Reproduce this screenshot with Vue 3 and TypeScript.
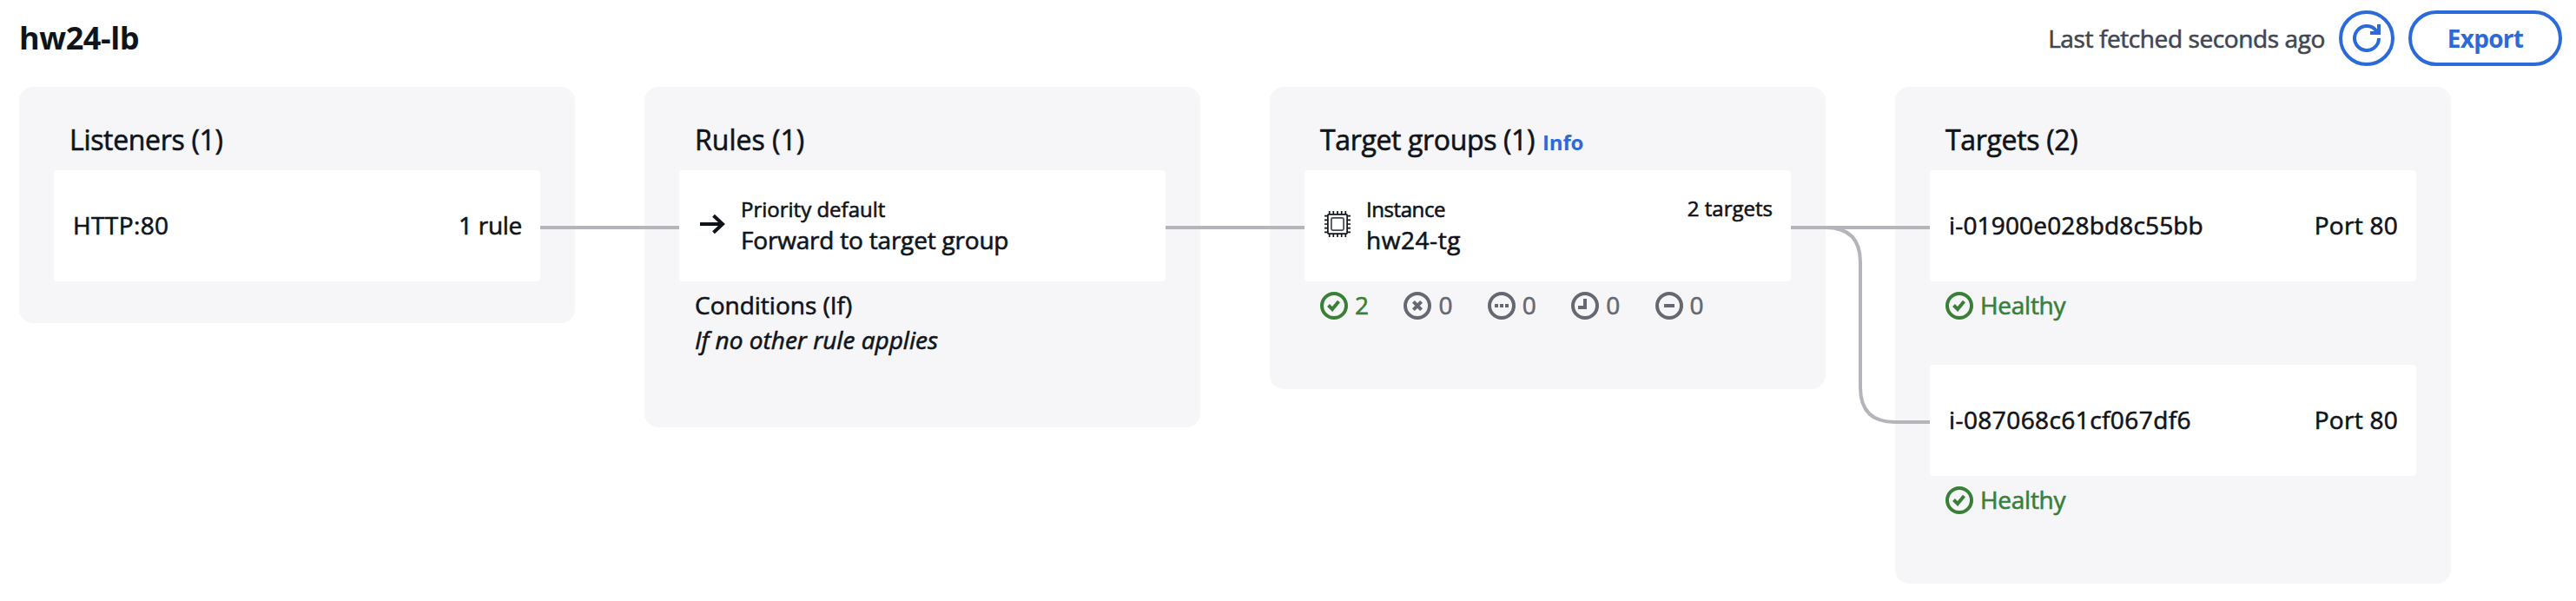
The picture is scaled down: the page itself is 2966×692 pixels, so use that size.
<script setup lang="ts">
type StatusKind = 'healthy' | 'unhealthy' | 'unused' | 'initial' | 'draining'

interface HealthCount {
  kind: StatusKind
  count: number
}

interface Target {
  id: string
  port: number
  fit: string
}

const glyphs: Record<StatusKind, string> = {
  healthy: 'M9.5 15.5l4.5 4.5 7.5-9',
  unhealthy: 'M11.4 11.4l9.2 9.2M20.6 11.4l-9.2 9.2',
  unused: 'M8 16h4M14 16h4M20 16h4',
  initial: 'M16 8v10H8',
  draining: 'M10 16h12',
}

const healthCounts: HealthCount[] = [
  { kind: 'healthy', count: 2 },
  { kind: 'unhealthy', count: 0 },
  { kind: 'unused', count: 0 },
  { kind: 'initial', count: 0 },
  { kind: 'draining', count: 0 },
]

const targets: Target[] = [
  { id: 'i-01900e028bd8c55bb', port: 80, fit: 'fit-a' },
  { id: 'i-087068c61cf067df6', port: 80, fit: 'fit-b' },
]
</script>

<template>
  <main class="map">
    <header class="header">
      <h1 class="title">hw24-lb</h1>
      <div class="actions">
        <span class="fetched">Last fetched seconds ago</span>
        <button class="btn btn-icon" type="button" aria-label="Refresh">
          <svg class="icon" viewBox="0 0 32 32">
            <path d="M30 16A14 14 0 1 1 27.5 8L30 11" />
            <path d="M30 0v10H20" />
          </svg>
        </button>
        <button class="btn btn-export" type="button"><span>Export</span></button>
      </div>
    </header>

    <div class="diagram">
      <section class="panel listeners">
        <h2 class="heading fit-listeners">Listeners (1)</h2>
        <div class="card">
          <span class="name fit-http">HTTP:80</span>
          <span class="end fit-rule">1 rule</span>
        </div>
      </section>

      <section class="panel rules">
        <h2 class="heading">Rules (1)</h2>
        <div class="card">
          <svg class="icon dark" viewBox="0 0 32 32">
            <path d="M2 16h26M17.5 6.2L28 16 17.5 25.8" />
          </svg>
          <div class="lines">
            <span class="small">Priority default</span>
            <span class="fit-forward">Forward to target group</span>
          </div>
        </div>
        <div class="conditions">
          <span>Conditions (If)</span>
          <em>If no other rule applies</em>
        </div>
      </section>

      <section class="panel groups">
        <h2 class="heading fit-groups">Target groups (1) <a class="info">Info</a></h2>
        <div class="card">
          <svg class="icon chip" viewBox="0 0 32 32">
            <rect x="4.9" y="4.9" width="22.2" height="22.2" rx="1" />
            <rect class="core" x="8.9" y="8.9" width="14.2" height="14.2" rx="1.6" />
            <path
              d="M6.7 1v4M11.3 1v4M16 1v4M20.7 1v4M25.3 1v4M6.7 27v4M11.3 27v4M16 27v4M20.7 27v4M25.3 27v4M1 6.7h4M1 11.3h4M1 16h4M1 20.7h4M1 25.3h4M27 6.7h4M27 11.3h4M27 16h4M27 20.7h4M27 25.3h4"
            />
          </svg>
          <div class="lines">
            <span class="small fit-instance">Instance</span>
            <span class="fit-tg">hw24-tg</span>
          </div>
          <span class="end small top">2 targets</span>
        </div>
        <ul class="counts">
          <li v-for="item in healthCounts" :key="item.kind" class="status" :class="{ ok: item.kind === 'healthy' }">
            <svg class="icon" viewBox="0 0 32 32">
              <circle cx="16" cy="16" r="14" />
              <path :d="glyphs[item.kind]" />
            </svg>
            <span>{{ item.count }}</span>
          </li>
        </ul>
      </section>

      <section class="panel targets">
        <h2 class="heading fit-targets">Targets (2)</h2>
        <div v-for="target in targets" :key="target.id" class="target">
          <div class="card">
            <span class="name" :class="target.fit">{{ target.id }}</span>
            <span class="end fit-port">Port {{ target.port }}</span>
          </div>
          <div class="status ok">
            <svg class="icon" viewBox="0 0 32 32">
              <circle cx="16" cy="16" r="14" />
              <path :d="glyphs.healthy" />
            </svg>
            <span class="fit-healthy">Healthy</span>
          </div>
        </div>
      </section>

      <svg class="connectors" viewBox="0 0 2800 572">
        <path d="M600 162H760M1320 162H1480M2040 162H2200" />
        <path d="M2040 162H2080Q2120 162 2120 202V346Q2120 386 2160 386H2200" />
      </svg>
    </div>
  </main>
</template>

<style>
body {
  background: #fff;
}
</style>

<style scoped>
.map {
  box-sizing: border-box;
  width: 2966px;
  height: 692px;
  padding: 12px 16px 0 22px;
  overflow: hidden;
  color: #0f141a;
  font: 400 28px/40px 'Open Sans', 'Noto Sans', sans-serif;
  -webkit-text-stroke: 0.6px currentColor;
}

.header {
  display: flex;
  align-items: center;
  justify-content: space-between;
  height: 64px;
  margin-bottom: 24px;
}

.title {
  margin: 0;
  font-size: 36px;
  font-weight: 700;
  letter-spacing: -0.4px;
  -webkit-text-stroke: 0;
}

.actions {
  display: flex;
  align-items: center;
}

.fetched {
  margin: 0 16px 1px 0;
  color: #424650;
  letter-spacing: -0.4px;
}

.btn {
  box-sizing: border-box;
  display: flex;
  align-items: center;
  justify-content: center;
  height: 64px;
  padding: 0;
  border: 4px solid #2b6ad9;
  border-radius: 32px;
  background: #fff;
  color: #2b6ad9;
  font: inherit;
  font-weight: 700;
  -webkit-text-stroke: 0;
}

.btn-icon {
  width: 64px;
  margin-right: 16px;
}

.btn-export {
  width: 177px;
  letter-spacing: -0.7px;
}

.btn-export span {
  margin-bottom: 1px;
}

.icon {
  flex: none;
  width: 32px;
  height: 32px;
  fill: none;
  stroke: currentColor;
  stroke-width: 4;
}

.diagram {
  position: relative;
  display: flex;
  align-items: flex-start;
  gap: 80px;
}

.panel {
  box-sizing: border-box;
  flex: none;
  width: 640px;
  padding: 41px 40px 76px;
  border-radius: 16px;
  background: #f6f6f9;
}

.listeners {
  padding-bottom: 48px;
}

.rules {
  padding-bottom: 81px;
}

.heading {
  height: 40px;
  margin: 0 0 15px 18px;
  font-size: 32px;
  font-weight: 400;
  line-height: 40px;
}

.info {
  margin-left: 1px;
  color: #2b6ad9;
  font-size: 24px;
  font-weight: 700;
  letter-spacing: -0.15px;
  -webkit-text-stroke: 0;
}

.card {
  box-sizing: border-box;
  display: flex;
  align-items: center;
  height: 128px;
  padding: 0 21px 2px 22px;
  border-radius: 4px;
  background: #fff;
}

.end {
  margin-left: auto;
}

.top {
  align-self: flex-start;
  margin-top: 26px;
}

.lines {
  display: flex;
  flex-direction: column;
  margin: -1px 0 0 17px;
  line-height: 35px;
}

.small {
  font-size: 24px;
  line-height: 36px;
}

.dark {
  margin-top: -2px;
}

.chip {
  margin-top: -2px;
  stroke-width: 1.7;
}

.core {
  stroke: #424650;
}

.conditions {
  display: flex;
  flex-direction: column;
  margin: 7px 0 0 18px;
}

.targets,
.groups {
  display: flex;
  flex-direction: column;
}

.target {
  display: flow-root;
}

.counts {
  display: flex;
  margin: 0;
  padding: 0;
  list-style: none;
}

.status {
  display: flex;
  align-items: center;
  gap: 8px;
  height: 32px;
  margin: 12px 0 4px 18px;
  color: #656871;
}

.status span {
  margin-bottom: 2px;
}

.counts .status {
  width: 96.4px;
  margin-right: -18px;
}

.counts .status + .status {
  margin-left: 18px;
}

.counts .ok,
.ok {
  color: #388038;
}

.target + .target {
  margin-top: 48px;
}

.connectors {
  position: absolute;
  top: 0;
  left: 0;
  width: 2800px;
  height: 572px;
  fill: none;
  stroke: #b4b4bb;
  stroke-width: 4;
  pointer-events: none;
}

.fit-listeners { letter-spacing: -0.32px; }
.fit-groups { letter-spacing: -0.36px; }
.fit-targets { letter-spacing: -0.32px; }
.fit-http { letter-spacing: 0.4px; }
.fit-rule { letter-spacing: -0.3px; }
.fit-forward { letter-spacing: -0.2px; }
.fit-instance { letter-spacing: -0.43px; }
.fit-tg { letter-spacing: 0.55px; }
.fit-a { letter-spacing: 0.16px; }
.fit-b { letter-spacing: 0.42px; }
.fit-port { letter-spacing: 0.27px; }
.fit-healthy { letter-spacing: -0.27px; }
</style>
